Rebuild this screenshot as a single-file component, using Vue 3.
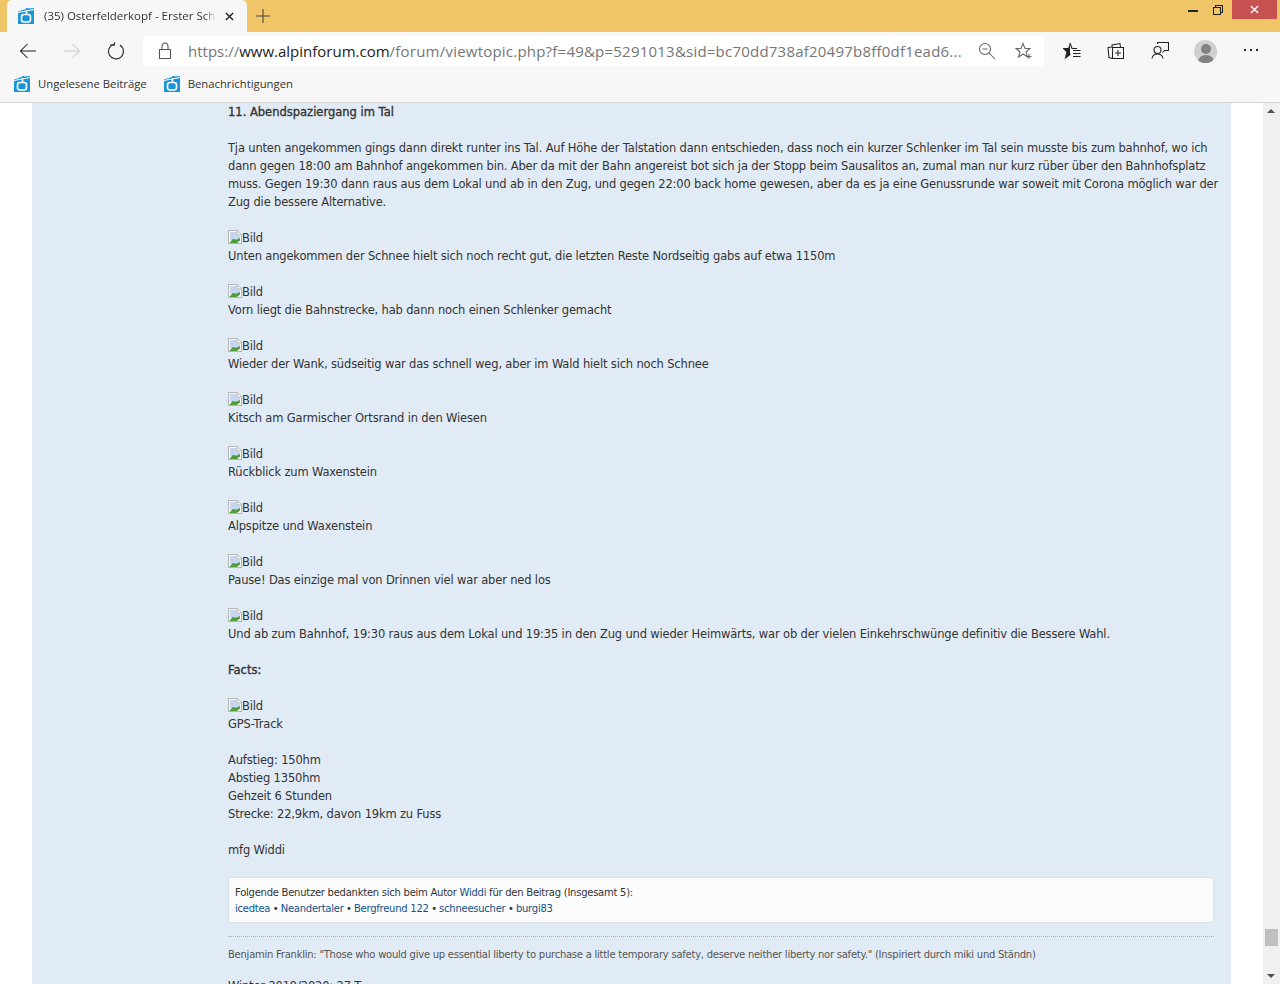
<script setup>
const blocks = [
  'Unten angekommen der Schnee hielt sich noch recht gut, die letzten Reste Nordseitig gabs auf etwa 1150m',
  'Vorn liegt die Bahnstrecke, hab dann noch einen Schlenker gemacht',
  'Wieder der Wank, südseitig war das schnell weg, aber im Wald hielt sich noch Schnee',
  'Kitsch am Garmischer Ortsrand in den Wiesen',
  'Rückblick zum Waxenstein',
  'Alpspitze und Waxenstein',
  'Pause! Das einzige mal von Drinnen viel war aber ned los',
  'Und ab zum Bahnhof, 19:30 raus aus dem Lokal und 19:35 in den Zug und wieder Heimwärts, war ob der vielen Einkehrschwünge definitiv die Bessere Wahl.',
]
const thanks = ['icedtea', 'Neandertaler', 'Bergfreund 122', 'schneesucher', 'burgi83']
</script>

<template>
  <div class="window">
    <div class="titlebar">
      <div class="tab">
        <svg class="favicon" viewBox="0 0 16 16"><use href="#fav" /></svg>
        <span class="tab-title">(35) Osterfelderkopf - Erster Schnee</span>
        <svg class="tab-x" viewBox="0 0 10 10"><path d="M1 1l8 8M9 1l-8 8" /></svg>
      </div>
      <svg class="plus" viewBox="0 0 14 14"><path d="M7 0v14M0 7h14" /></svg>
      <div class="winctl">
        <svg class="ctl min" viewBox="0 0 10 10"><path d="M0 5h10" stroke-width="2" /></svg>
        <svg class="ctl max" viewBox="0 0 10 10"><path d="M.5 2.500h7v7h-7zM2.500 2.500v-2h7v7h-2" /></svg>
        <div class="close"><svg viewBox="0 0 10 10"><path d="M1 1l8 8M9 1l-8 8" /></svg></div>
      </div>
    </div>

    <div class="toolbar">
      <svg class="nav" viewBox="0 0 18 18"><path d="M17 9H1.500M8.500 2l-7 7 7 7" /></svg>
      <svg class="nav off" viewBox="0 0 18 18"><path d="M1 9h15.500M9.500 2l7 7-7 7" /></svg>
      <svg class="nav" viewBox="0 0 18 18"><path d="M6 2.500A7.500 7.500 0 1 0 12 2.500M6.500 .5v3h-4" transform="rotate(8 9 9)" /></svg>
      <div class="address">
        <svg class="lock" viewBox="0 0 14 17"><path d="M1.500 7.500h11v9h-11zM4 7.500V4a3 3 0 0 1 6 0v3.500" /></svg>
        <span class="url">https://<b>www.alpinforum.com</b><span class="tail">/forum/viewtopic.php?f=49&amp;p=5291013&amp;sid=bc70dd738af20497b8ff0df1ead6...</span></span>
        <svg class="addr-ic zoom-ic" viewBox="0 0 18 18"><circle cx="7" cy="7" r="5.500" /><path d="M4.500 7h5M11 11l6 6" /></svg>
        <svg class="addr-ic star" viewBox="0 0 18 18"><path d="M8 1.500l2 5h5l-4 3.500 1.500 5-4.500-3-4.500 3 1.500-5-4-3.500h5zM14 12v5M11.500 14.500h5" /></svg>
      </div>
      <svg class="tool first" viewBox="0 0 18 18"><path d="M7 1l2 5.500h5M7 12.500l-4.500 3.500L4 10 .5 6.500H5z" /><path d="M7 1v11.500L2.500 16 4 10 .5 6.500H5z" fill="#222" stroke="none" /><path d="M10 8.500h7.500M10 11.500h7.500M10 14.500h7.500" /></svg>
      <svg class="tool" viewBox="0 0 18 18"><path d="M5 5.500V3l8-1.500.5 4M5 16.500l-3-1L1 5.500l4-.5" /><path d="M5.500 5.500h11v11h-11zM11 8v6M8 11h6" /></svg>
      <svg class="tool" viewBox="0 0 18 18"><circle cx="6.500" cy="8" r="3.500" /><path d="M1 16.500c.5-3 2.500-4.500 5.500-4.500s5 1.500 5.500 4.500M6.500 2V.5h11v8h-4l-2 2" /></svg>
      <div class="avatar"><i></i><em></em></div>
      <div class="dots"><i></i><i></i><i></i></div>
    </div>

    <div class="bookmarks">
      <div class="bookmark">
        <svg class="favicon" viewBox="0 0 16 16"><use href="#fav" /></svg>
        <span>Ungelesene Beiträge</span>
      </div>
      <div class="bookmark">
        <svg class="favicon" viewBox="0 0 16 16"><use href="#fav" /></svg>
        <span>Benachrichtigungen</span>
      </div>
    </div>

    <svg width="0" height="0" class="defs">
      <symbol id="fav" viewBox="0 0 16 16">
        <path d="M0 3.500l8-2.500V0h2v.5L16 0v16H0z" fill="#1b95d6" />
        <path d="M0 4.500l16-3" stroke="#fff" stroke-width="1" fill="none" />
        <path d="M8.500 2v5" stroke="#fff" stroke-width="1.500" fill="none" />
        <rect x="3.500" y="6.500" width="9" height="7.500" rx="2.500" fill="none" stroke="#fff" stroke-width="1.600" />
      </symbol>
      <symbol id="broken" viewBox="0 0 14 14">
        <path d="M.5.5h8.500l4.500 4.500v8.500h-13z" fill="#fff" stroke="#b4b4b4" />
        <path d="M2 2h6.500v3.500H12v3L2 10z" fill="#c4d6f0" />
        <path d="M1.500 13l3-4 4 .5L12 8v2.500l-3 2.500z" fill="#4f9d3a" />
        <path d="M9 1v4h4" fill="#fff" stroke="#b4b4b4" />
      </symbol>
    </svg>

    <div class="viewport">
      <div class="page">
        <div class="wrap">
          <div class="post">
            <div class="line strong">11. Abendspaziergang im Tal</div>
            <div class="line">&nbsp;</div>
            <div class="para">Tja unten angekommen gings dann direkt runter ins Tal. Auf Höhe der Talstation dann entschieden, dass noch ein kurzer Schlenker im Tal sein musste bis zum bahnhof, wo ich<br>dann gegen 18:00 am Bahnhof angekommen bin. Aber da mit der Bahn angereist bot sich ja der Stopp beim Sausalitos an, zumal man nur kurz rüber über den Bahnhofsplatz<br>muss. Gegen 19:30 dann raus aus dem Lokal und ab in den Zug, und gegen 22:00 back home gewesen, aber da es ja eine Genussrunde war soweit mit Corona möglich war der<br>Zug die bessere Alternative.</div>
            <div class="line">&nbsp;</div>
            <template v-for="text in blocks" :key="text">
              <div class="line"><svg class="broken" viewBox="0 0 14 14"><use href="#broken" /></svg>Bild</div>
              <div class="line">{{ text }}</div>
              <div class="line">&nbsp;</div>
            </template>
            <div class="line strong">Facts:</div>
            <div class="line">&nbsp;</div>
            <div class="line"><svg class="broken" viewBox="0 0 14 14"><use href="#broken" /></svg>Bild</div>
            <div class="line">GPS-Track</div>
            <div class="line">&nbsp;</div>
            <div class="line">Aufstieg: 150hm</div>
            <div class="line">Abstieg 1350hm</div>
            <div class="line">Gehzeit 6 Stunden</div>
            <div class="line">Strecke: 22,9km, davon 19km zu Fuss</div>
            <div class="line">&nbsp;</div>
            <div class="line">mfg Widdi</div>

            <div class="notice">
              <div>Folgende Benutzer bedankten sich beim Autor <a>Widdi</a> für den Beitrag (Insgesamt 5):</div>
              <div>
                <template v-for="(name, i) in thanks" :key="name"><span v-if="i" class="sep"> • </span><a>{{ name }}</a></template>
              </div>
            </div>

            <div class="signature">
              <div>Benjamin Franklin: "Those who would give up essential liberty to purchase a little temporary safety, deserve neither liberty nor safety." (Inspiriert durch miki und Ständn)</div>
              <div class="sig-next">Winter 2019/2020: 27 T</div>
            </div>
          </div>
        </div>
      </div>
      <div class="scrollbar">
        <span class="arrow up"></span>
        <span class="thumb"></span>
        <span class="arrow down"></span>
      </div>
    </div>
  </div>
</template>

<style>
html, body { margin: 0; overflow: hidden; }
</style>

<style scoped>
.window {
  width: 1280px;
  height: 984px;
  display: flex;
  flex-direction: column;
  overflow: hidden;
  font-family: "DejaVu Sans", sans-serif;
  background: #fff;
}
.defs { position: absolute; }
svg { fill: none; stroke: #222; stroke-width: 1.05; flex: none; }

.titlebar {
  height: 32px;
  background: #efc568;
  display: flex;
  align-items: flex-end;
  flex: none;
}
.tab {
  width: 240px;
  height: 32px;
  margin-left: 7px;
  background: #f7f7f7;
  border-radius: 5px 5px 0 0;
  display: flex;
  align-items: center;
  box-sizing: border-box;
  padding-left: 11px;
}
.tab .favicon { width: 16px; height: 16px; stroke: none; }
.tab-title {
  width: 173px;
  margin-left: 10px;
  margin-top: -2px;
  font: 11.5px "Open Sans", sans-serif;
  color: #333;
  white-space: nowrap;
  overflow: hidden;
  -webkit-mask-image: linear-gradient(to right, #000 160px, transparent 173px);
  mask-image: linear-gradient(to right, #000 160px, transparent 173px);
}
.tab-x { width: 9px; height: 9px; margin-left: 8px; stroke-width: 1.6; }
.plus { width: 14px; height: 14px; margin: 0 0 9px 9px; stroke: #444; }
.winctl {
  margin-left: auto;
  align-self: flex-start;
  display: flex;
  align-items: flex-start;
  margin-right: 3px;
}
.ctl { width: 10px; height: 10px; }
.min { margin: 6px 15px 0 0; }
.max { margin: 5px 9px 0 0; }
.close {
  width: 45px;
  height: 19px;
  background: #c75050;
  display: flex;
  align-items: center;
  justify-content: center;
}
.close svg { width: 9px; height: 9px; stroke: #fff; stroke-width: 1.5; }

.toolbar {
  height: 38px;
  flex: none;
  background: #f7f7f7;
  display: flex;
  align-items: center;
  padding-left: 19px;
}
.nav { width: 18px; height: 18px; margin-right: 26px; }
.nav.off { stroke: #c9c9c9; }
.address {
  width: 901px;
  height: 30px;
  margin-left: -8px;
  margin-top: -1px;
  background: #fff;
  border-radius: 4px;
  display: flex;
  align-items: center;
  box-sizing: border-box;
  padding-left: 15px;
}
.lock { width: 14px; height: 17px; stroke: #555; }
.url {
  width: 775px;
  margin-left: 16px;
  margin-right: -1px;
  font: 15px "Open Sans", sans-serif;
  color: #767676;
  white-space: nowrap;
  overflow: hidden;
}
.url b { font-weight: 400; color: #222; }
.tail { letter-spacing: 0.22px; }
.addr-ic { width: 18px; height: 18px; stroke: #666; }
.zoom-ic { margin-left: 16px; }
.star { margin-left: 19px; }
.tool { width: 18px; height: 18px; margin-left: 26px; }
.tool.first { margin-left: 19px; }
.avatar {
  width: 23px;
  height: 23px;
  margin-left: 25px;
  border-radius: 50%;
  background: #cfcfcf;
  position: relative;
  overflow: hidden;
}
.avatar i {
  position: absolute;
  left: 7px;
  top: 4px;
  width: 10px;
  height: 10px;
  border-radius: 50%;
  background: #828282;
}
.avatar em {
  position: absolute;
  left: 4px;
  top: 15px;
  width: 16px;
  height: 14px;
  border-radius: 50%;
  background: #828282;
}
.dots {
  margin-left: 27px;
  display: flex;
  gap: 4px;
  margin-top: -2px;
}
.dots i {
  width: 2px;
  height: 2px;
  background: #222;
}

.bookmarks {
  height: 33px;
  flex: none;
  box-sizing: border-box;
  background: #f7f7f7;
  border-bottom: 1px solid #d4d4d4;
  display: flex;
  align-items: center;
  padding-left: 14px;
  padding-bottom: 5px;
  font: 11.3px "Open Sans", sans-serif;
  color: #333;
}
.bookmark { display: flex; align-items: center; margin-right: 17px; }
.bookmark .favicon { width: 16px; height: 16px; margin-right: 8px; stroke: none; }

.viewport {
  flex: 1;
  display: flex;
  min-height: 0;
}
.page {
  flex: 1;
  min-width: 0;
  overflow: hidden;
  background: #fff;
}
.wrap {
  margin: 0 32px;
  height: 100%;
  background: #e1ebf5;
  overflow: hidden;
  padding-left: 196px;
  box-sizing: border-box;
}
.post {
  width: 986px;
  font-size: 11.5px;
  line-height: 18px;
  color: #333;
  letter-spacing: -0.165px;
}
.line, .para { white-space: nowrap; }
.strong { -webkit-text-stroke: 0.35px #333; letter-spacing: 0; }
.broken { width: 14px; height: 14px; vertical-align: -2px; stroke: none; }
.notice {
  margin-top: 18px;
  height: 46px;
  box-sizing: border-box;
  background: #fcfcfd;
  border: 1px solid #d9dfe6;
  padding: 7px 6px 5px;
  font-size: 10px;
  letter-spacing: -0.25px;
  line-height: 16px;
}
.notice a { color: #105289; }
.sep { letter-spacing: -0.6px; }
.signature {
  margin-top: 13px;
  border-top: 1px dotted #a8b4bf;
  padding-top: 9px;
  font-size: 10px;
  letter-spacing: -0.25px;
  line-height: 18px;
  color: #555;
  white-space: nowrap;
}
.sig-next {
  margin-top: 13px;
  font-size: 11.5px;
  letter-spacing: -0.165px;
  color: #333;
}

.scrollbar {
  width: 17px;
  flex: none;
  background: #f0f0f0;
  position: relative;
}
.arrow {
  position: absolute;
  left: 4px;
  width: 0;
  height: 0;
  border-left: 4px solid transparent;
  border-right: 4px solid transparent;
}
.arrow.up { top: 6px; border-bottom: 4px solid #505050; }
.arrow.down { bottom: 6px; border-top: 4px solid #505050; }
.thumb {
  position: absolute;
  left: 2px;
  width: 13px;
  height: 17px;
  top: 826px;
  background: #c0c0c0;
}
</style>
